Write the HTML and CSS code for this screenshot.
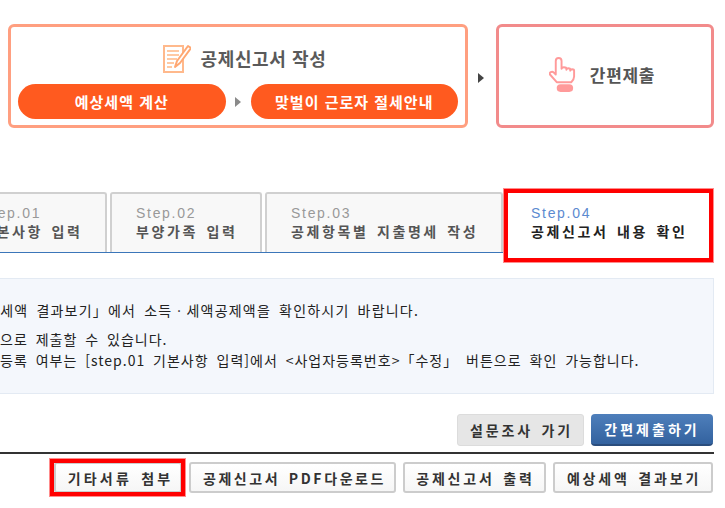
FILE: index.html
```html
<!DOCTYPE html>
<html lang="ko">
<head>
  <meta charset="UTF-8">
  <meta name="viewport" content="width=device-width, initial-scale=1.0">
  <title>공제신고서 내용 확인</title>
  <link rel="stylesheet" href="styles.css">
</head>
<body>
  <div class="page">

    <div class="flow">
      <div class="flow-box flow-write">
        <div class="flow-title">
          <svg class="icon-note" viewBox="0 0 28 29" width="28" height="29">
            <path d="M1 2h19v26H1z" fill="#fff" stroke="#ffb98c" stroke-width="2"/>
            <path d="M4 6h12v2H4zM4 10h12v2H4zM4 14h10v2H4zM4 18h7v2H4zM4 22h5v2H4z" fill="#ffc9a3"/>
            <path d="M12 23l2-6L25 2l3 2-11 15z" fill="#fff" stroke="#ffa873" stroke-width="2" stroke-linejoin="round"/>
          </svg>
          <span>공제신고서 작성</span>
        </div>
        <div class="flow-steps">
          <div class="pill">예상세액 계산</div>
          <span class="arrow arrow-gray"></span>
          <div class="pill">맞벌이 근로자 절세안내</div>
        </div>
      </div>
      <div class="flow-gap"><span class="arrow arrow-dark"></span></div>
      <div class="flow-box flow-submit">
        <svg class="icon-hand" viewBox="1 0 29 36" width="28" height="35">
          <path d="M8 18V4a3 3 0 0 1 6 0v8c0-2 5-2 5 0v1c0-2 4-2 4 0v1c0-2 4-2 4 0v6c0 3-2 5-3 6H9l-7-8c-1-2 2-4 4-2l2 2z" fill="#fff" stroke="#ff9a9a" stroke-width="2" stroke-linejoin="round"/>
          <rect x="9" y="28" width="17" height="8" rx="4" fill="#ff9a9a"/>
        </svg>
        <span>간편제출</span>
      </div>
    </div>

    <div class="tabs">
      <div class="tab tab-first">
        <span class="tab-step">Step.01</span>
        <strong>기본사항 입력</strong>
      </div>
      <div class="tab tab-second">
        <span class="tab-step">Step.02</span>
        <strong>부양가족 입력</strong>
      </div>
      <div class="tab tab-third">
        <span class="tab-step">Step.03</span>
        <strong>공제항목별 지출명세 작성</strong>
      </div>
      <div class="tab tab-on">
        <span class="tab-step">Step.04</span>
        <strong>공제신고서 내용 확인</strong>
        <i class="mark mark-tab"></i>
      </div>
    </div>

    <div class="notice">
      <p class="notice-first">예상세액 결과보기」에서 소득ㆍ세액공제액을 확인하시기 바랍니다.</p>
      <p>으로 제출할 수 있습니다.</p>
      <p>등록 여부는 [step.01 기본사항 입력]에서 &lt;사업자등록번호&gt;「수정」 버튼으로 확인 가능합니다.</p>
    </div>

    <div class="actions">
      <button class="btn-gray">설문조사 가기</button>
      <button class="btn-blue">간편제출하기</button>
    </div>

    <div class="tools">
      <button class="btn-tool btn-attach">기타서류 첨부<i class="mark mark-btn"></i></button>
      <button class="btn-tool btn-pdf">공제신고서 PDF다운로드</button>
      <button class="btn-tool btn-print">공제신고서 출력</button>
      <button class="btn-tool btn-result">예상세액 결과보기</button>
    </div>

  </div>
</body>
</html>
```

FILE: styles.css
```css
* {
  box-sizing: border-box;
}

body {
  margin: 0;
  background: #fff;
  font-family: "Noto Sans CJK KR", "Noto Sans", sans-serif;
}

.page {
  width: 725px;
  height: 508px;
  overflow: hidden;
  padding: 24px 11px 0 8px;
}

/* top flow */
.flow {
  display: flex;
  height: 104px;
}

.flow-box {
  background: #fff;
  border-radius: 6px;
}

.flow-write {
  width: 460px;
  border: 3px solid #ff9f80;
  padding: 15px 7px 0 7px;
}

.flow-title {
  display: flex;
  align-items: center;
  justify-content: center;
  gap: 10px;
  height: 32px;
  margin-bottom: 10px;
  padding-left: 13px;
  font-size: 18px;
  font-weight: 700;
  letter-spacing: 0.6px;
  color: #5a5a5a;
}

.flow-steps {
  display: flex;
  align-items: center;
  justify-content: space-between;
}

.pill {
  width: 207.5px;
  height: 35px;
  border-radius: 18px;
  background: #ff5a1f;
  color: #fff;
  font-size: 15px;
  font-weight: 700;
  line-height: 35px;
  text-align: center;
  letter-spacing: 1px;
}

.arrow {
  display: block;
  width: 0;
  height: 0;
  border-left: 6px solid #444;
  border-top: 5px solid transparent;
  border-bottom: 5px solid transparent;
}

.arrow-gray {
  border-left-color: #8a8a8a;
}

.arrow-dark {
  margin: 3px 3px 0 0;
}

.flow-gap {
  width: 28px;
  display: flex;
  align-items: center;
  justify-content: center;
}

.flow-submit {
  width: 218px;
  border: 3px solid #f28b8b;
  display: flex;
  align-items: center;
  justify-content: center;
  gap: 13px;
  padding: 0 6px 3px 0;
  font-size: 17px;
  font-weight: 700;
  letter-spacing: 0.7px;
  color: #555;
}

/* step tabs */
.tabs {
  display: flex;
  gap: 3px;
  height: 61px;
  margin: 64px 0 0 -53px;
  margin-right: 210px;
  border-bottom: 1px solid #3b76b9;
}

.tab {
  position: relative;
  height: 60px;
  padding: 11px 0 0 24px;
  background: #f8f8f8;
  border: 2px solid #d0d0d0;
  border-bottom: 0;
  border-radius: 3px 3px 0 0;
  flex: none;
}

.tab-step {
  display: block;
  font-family: "Liberation Sans", sans-serif;
  font-size: 14px;
  line-height: 17px;
  letter-spacing: 1.7px;
  color: #999;
}

.tab strong {
  display: block;
  font-size: 14px;
  line-height: 19px;
  letter-spacing: 2.6px;
  word-spacing: 2px;
  color: #555;
  white-space: nowrap;
}

.tab-first,
.tab-second {
  width: 152px;
}

.tab-third {
  width: 238px;
}

.tab-on {
  width: 210px;
  height: 61px;
  margin-left: -2px;
  background: #fff;
  border: 0;
  padding: 13px 0 0 27px;
}

.tab-on .tab-step {
  color: #5b8ad0;
}

.tab-on strong {
  color: #222;
}

/* red marks drawn over the screenshot */
.mark {
  position: absolute;
  border: 4px solid #f00;
  box-shadow: 0 0 0 1px #ff8c8c;
  pointer-events: none;
}

.mark-tab {
  top: -3px;
  right: 1px;
  bottom: -9px;
  left: 0;
}

.mark-btn {
  top: -5px;
  right: -5px;
  bottom: -5px;
  left: -6px;
}

/* notice box */
.notice {
  height: 116px;
  margin: 25px 0 0 -20px;
  padding: 21px 0 0 11px;
  background: #f4f7fc;
  border: 1px solid #e3eaf3;
  font-size: 14px;
  line-height: 21px;
  color: #222;
  white-space: nowrap;
}

.notice p {
  margin: 0;
  letter-spacing: 1px;
  word-spacing: 3px;
}

.notice .notice-first {
  margin: 0 0 8px -28px;
  letter-spacing: 1.2px;
}

/* buttons */
button {
  font-family: inherit;
  font-size: 14px;
  font-weight: 700;
  letter-spacing: 2.8px;
  word-spacing: 2px;
  cursor: pointer;
  white-space: nowrap;
}

.actions {
  display: flex;
  justify-content: flex-end;
  gap: 7px;
  margin: 20px 0 0 -8px;
  padding: 0 1px 6px 0;
  border-bottom: 2px solid #333;
}

.btn-gray {
  width: 127px;
  height: 32px;
  padding: 0 0 0 2px;
  background: #e6e6e6;
  border: 1px solid #dcdcdc;
  border-radius: 3px;
  color: #333;
}

.btn-blue {
  width: 122px;
  height: 32px;
  padding: 0;
  background: linear-gradient(#4e7fbb, #33629f);
  border: 0;
  border-bottom: 2px solid #2a4d7d;
  border-radius: 4px;
  color: #fff;
  letter-spacing: 3px;
}

.tools {
  display: flex;
  justify-content: flex-end;
  gap: 7px;
  margin-top: 8px;
  padding-right: 1px;
}

.btn-tool {
  position: relative;
  height: 31px;
  padding: 0 0 0 2px;
  background: linear-gradient(#fff, #f6f6f6);
  border: 2px solid #ccc;
  border-radius: 3px;
  color: #333;
}

.btn-attach {
  width: 128px;
  padding-left: 5px;
  letter-spacing: 3.2px;
}

.btn-pdf {
  width: 207px;
  padding-left: 4px;
  letter-spacing: 2.6px;
}

.btn-print {
  width: 143px;
}

.btn-result {
  width: 160px;
}
```
